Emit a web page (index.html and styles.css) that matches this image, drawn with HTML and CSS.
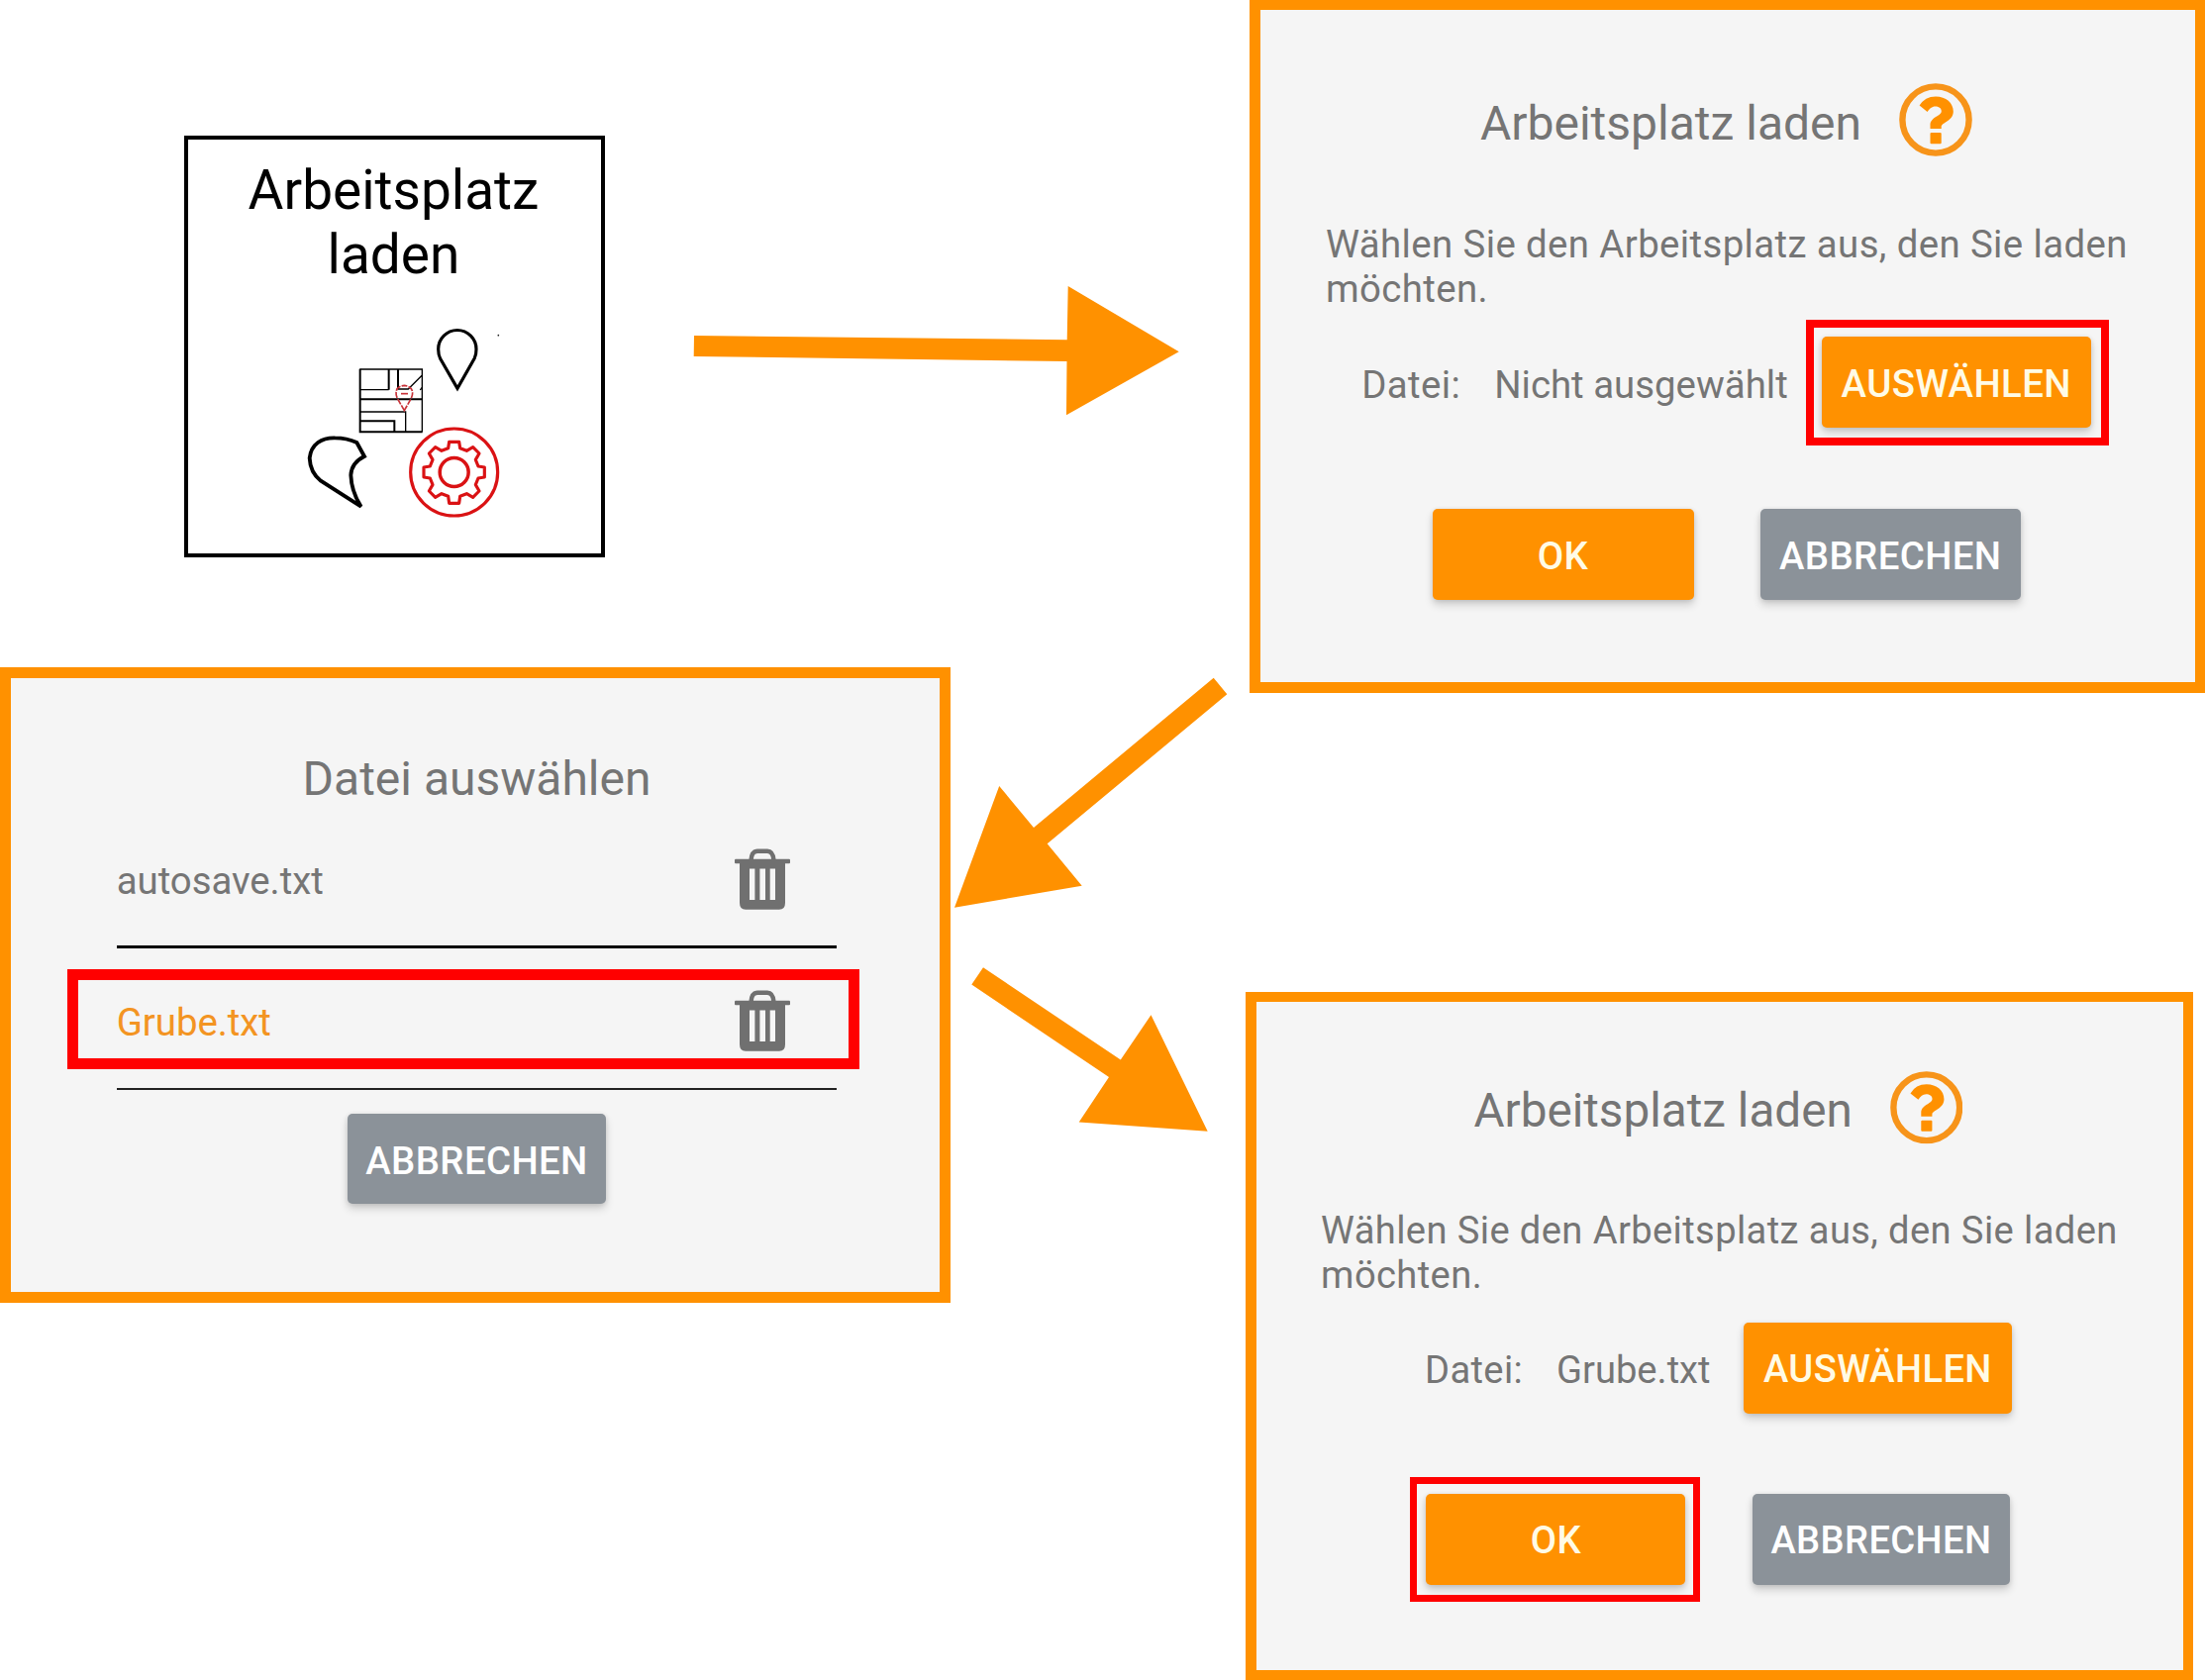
FILE: index.html
```html
<!DOCTYPE html>
<html lang="de">
<head>
<meta charset="utf-8">
<title>Arbeitsplatz laden</title>
<link rel="stylesheet" href="styles.css">
</head>
<body>
<svg class="defs" aria-hidden="true">
  <symbol id="help" viewBox="0 0 74 74">
    <circle cx="37" cy="37" r="33.6" fill="none" stroke="#f7941a" stroke-width="6.4"/>
    <path fill="#ff9100" d="M20.6 22.6Q26 13.4 37 13.4C47.500 13.400 54.800 20 54.800 28.500C54.800 38.500 43 39.500 42.700 44V46H31.500V42.500C31.500 34 42.800 33.500 42.800 28.300C42.800 25 39.800 23.500 36.600 23.500C33 23.500 31 25.800 28.600 28.900Z"/>
    <rect x="31.500" y="50" width="11.200" height="11.200" rx="1" fill="#ff9100"/>
  </symbol>
  <symbol id="trash" viewBox="0 0 56 62">
    <path fill="none" stroke="#707070" stroke-width="4.4" d="M16.5 12C17 6 19 2.7 23 2.7H33C37 2.7 39 6 39.5 12"/>
    <rect y="10.8" width="56" height="4.4" rx="1" fill="#707070"/>
    <path fill="#707070" fill-rule="evenodd" d="M5 13H51V55Q51 61.8 45 61.8H11Q5 61.8 5 55ZM15 20.6V52H20.4V20.6ZM25.4 20.6V52H31V20.6ZM35.7 20.6V52H41V20.6Z"/>
  </symbol>
</svg>
<main class="board">
  <section class="tile">
    <h1 class="tile-title">Arbeitsplatz<br>laden</h1>
    <svg class="tile-art" viewBox="0 0 660 660" fill="none">
      <g stroke="#000">
        <path stroke-width="9.500" d="M486 217L434 127Q428 115 428 98A57.500 57.500 0 0 1 543 98Q543 115 538 125Z"/>
        <path stroke-width="4" d="M190 159H379V349M191 221H278M306 219H337L379 177M190 288H329V349M373 222L379 213"/>
        <path stroke-width="6" d="M191 158V349H380M278 159V221M306 159V219M190 249.500H379M190 316H295V349"/>
        <path stroke-width="11.500" d="M194 575L72 497C46 477 39 452 38 428C43 385 75 366 115 367Q150 367 181 381L204 423Q165 442 163 480Q165 530 194 575Z"/>
      </g>
      <path stroke="#c83238" stroke-width="5" stroke-dasharray="18 4" d="M325 284L304 247C288 210 325 208 325 208C325 208 362 210 346 247Z"/>
      <path stroke="#c83238" stroke-width="5" d="M315 233H336"/>
      <g stroke="#da1214" transform="translate(476 471)">
        <circle r="132" stroke-width="9.500"/>
        <circle r="43.500" stroke-width="10.500"/>
        <path stroke-width="9.500" stroke-linejoin="round" d="M-15-92H15L18-73L38-65L57-76L76-57L65-38L73-18L92-15V15L73 18L65 38L76 57L57 76L38 65L18 73L15 94H-15L-18 73L-38 65L-57 76L-76 57L-65 38L-73 18L-92 15V-15L-73-18L-65-38L-76-57L-57-76L-38-65L-18-73Z"/>
      </g>
      <circle cx="610" cy="56" r="2.500" fill="#222"/>
    </svg>
  </section>

  <section class="dialog load first">
    <header class="head"><h2 class="title">Arbeitsplatz laden</h2><svg class="help"><use href="#help"/></svg></header>
    <p class="text">Wählen Sie den Arbeitsplatz aus, den Sie laden<br>möchten.</p>
    <div class="file-row">
      <span class="label">Datei:</span><span class="value">Nicht ausgewählt</span>
      <div class="target"><button class="btn pick">AUSWÄHLEN</button><i class="mark"></i></div>
    </div>
    <div class="actions">
      <div class="target"><button class="btn ok">OK</button></div>
      <button class="btn cancel">ABBRECHEN</button>
    </div>
  </section>

  <section class="dialog files">
    <h2 class="title">Datei auswählen</h2>
    <ul class="list">
      <li class="item"><span>autosave.txt</span><svg class="trash"><use href="#trash"/></svg></li>
      <li class="item selected"><span>Grube.txt</span><svg class="trash"><use href="#trash"/></svg><i class="mark"></i></li>
    </ul>
    <button class="btn cancel">ABBRECHEN</button>
  </section>

  <section class="dialog load second">
    <header class="head"><h2 class="title">Arbeitsplatz laden</h2><svg class="help"><use href="#help"/></svg></header>
    <p class="text">Wählen Sie den Arbeitsplatz aus, den Sie laden<br>möchten.</p>
    <div class="file-row">
      <span class="label">Datei:</span><span class="value">Grube.txt</span>
      <div class="target"><button class="btn pick">AUSWÄHLEN</button></div>
    </div>
    <div class="actions">
      <div class="target"><button class="btn ok">OK</button><i class="mark"></i></div>
      <button class="btn cancel">ABBRECHEN</button>
    </div>
  </section>

  <svg class="arrows" viewBox="0 0 2227 1697" fill="#ff9100">
    <path d="M701 339L1077.700 343.300L1078.700 289L1190.700 355.300L1077 419.200L1077.500 365L700.700 360Z"/>
    <path d="M1225.700 684.700L1239.300 701.200L1057.700 852.300L1092.700 894.700L964 916.700L1009.200 794L1044 836Z"/>
    <path d="M993 977.300L1131.800 1070.500L1162.500 1025.300L1219.700 1142.700L1089.700 1133.500L1120 1088L981.300 994.500Z"/>
  </svg>
</main>
</body>
</html>
```
FILE: styles.css
```css
* { box-sizing: border-box; }

body {
  margin: 0;
  background: #fff;
  font-family: Roboto, "Liberation Sans", sans-serif;
}

h1, h2, p, ul { margin: 0; padding: 0; font-weight: 400; }

.defs { position: absolute; width: 0; height: 0; }

/* Free canvas carrying the steps and the arrows between them */
.board { position: relative; width: 2227px; height: 1697px; overflow: hidden; }
.arrows { position: absolute; inset: 0; width: 2227px; height: 1697px; pointer-events: none; }

.tile {
  position: absolute;
  left: 186px;
  top: 137px;
  width: 425px;
  height: 426px;
  border: 4.500px solid #000;
  padding-top: 19px;
}
.tile-title { padding-right: 2px; font-size: 55px; line-height: 64.500px; text-align: center; color: #000; }
.tile-art { display: block; width: 220px; height: 220px; margin: 31px 0 0 110px; }

.dialog {
  --u: 1px;
  position: absolute;
  display: flex;
  flex-direction: column;
  background: #f5f5f5;
  border: 11px solid #ff9100;
  color: #757575;
  font-size: calc(38.400 * var(--u));
  letter-spacing: .38px;
  white-space: nowrap;
}
.title { font-size: calc(48 * var(--u)); line-height: calc(56 * var(--u)); letter-spacing: 0; }

.first { left: 1262px; top: 0; width: 965px; height: 700px; border-width: 10px 10px 11px 11px; padding: 74px 3px 0 0; }
.second { --u: .9935px; left: 1257.500px; top: 1002px; width: 957.500px; height: 695px; border-width: 10px 10px 10px 11px; padding: 70px 3px 0 0; }

.head { display: flex; justify-content: center; align-items: center; gap: calc(38 * var(--u)); height: calc(74 * var(--u)); }
.head .title { padding-top: calc(7 * var(--u)); }
.second .title { padding-top: 9px; }
.help { width: calc(74 * var(--u)); height: calc(74 * var(--u)); }

.text { margin: calc(66 * var(--u)) 0 0 calc(66 * var(--u)); line-height: calc(45 * var(--u)); }

.file-row { display: flex; justify-content: center; align-items: center; margin-top: calc(26 * var(--u)); height: calc(92 * var(--u)); }
.label, .value { padding-top: calc(4 * var(--u)); }
.value { margin: 0 calc(34 * var(--u)); letter-spacing: 0; }

.actions { display: flex; justify-content: center; gap: calc(67.500 * var(--u)); margin-top: calc(82 * var(--u)); }

.btn {
  display: block;
  height: calc(92 * var(--u));
  border: 0;
  border-radius: 5px;
  padding: calc(3 * var(--u)) 0 0;
  background: #ff9100;
  color: #fffbe6;
  font: 500 calc(38.400 * var(--u)) Roboto, "Liberation Sans", sans-serif;
  letter-spacing: .38px;
  text-align: center;
  box-shadow: 0 5px 8px rgba(0, 0, 0, .16), 0 1px 5px rgba(0, 0, 0, .1);
}
.pick { width: calc(272 * var(--u)); }
.ok { width: calc(264 * var(--u)); }
.cancel { width: calc(262.500 * var(--u)); background: #8b9299; color: #fff; }

/* Red frames drawn over the control to tap next */
.target { position: relative; }
.mark { position: absolute; border: 7.500px solid #f00; pointer-events: none; }
.first .mark { inset: -17.500px -18px -18px -16px; border-width: 8px; }
.second .mark { inset: -17.500px -15px -17px -16.500px; }

.files { left: 0; top: 674px; width: 960px; height: 642px; align-items: center; padding: 74px 0 0 3px; }
.list { width: 727.500px; margin-top: 32px; list-style: none; }
.item {
  position: relative;
  display: flex;
  justify-content: space-between;
  height: 143.500px;
  padding: 42px 47px 0 0;
  border-bottom: 3px solid #000;
}
.item:first-child { height: 111px; padding-top: 9.500px; margin-top: 0; }
.item.selected { border-bottom: 2px solid #222; height: 143px; }
.item > span { line-height: 65px; letter-spacing: -.05px; }
.selected > span { color: #f39422; }
.trash { width: 56px; height: 62px; }
.files .mark { left: -50px; right: -23px; top: 21px; height: 101px; border-width: 11px; }
.files .cancel { width: 261px; height: 91px; margin-top: 24px; }
```
